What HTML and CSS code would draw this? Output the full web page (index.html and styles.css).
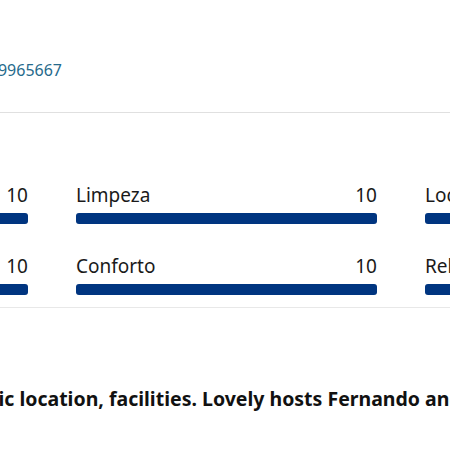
FILE: index.html
```html
<!DOCTYPE html>
<html lang="pt">
<head>
    <meta charset="UTF-8">
    <meta name="viewport" content="width=device-width, initial-scale=1.0">
    <title>Avaliações</title>
    <link rel="stylesheet" href="styles.css">
</head>
<body>
    <div class="page">
        <div class="contact">Telefone: +351 239965667</div>
        <hr class="divider">

        <div class="ratings">
            <div class="rating">
                <div class="rating-head"><span>Funcionários</span><span>10</span></div>
                <div class="bar"><div class="bar-fill" style="width: 100%"></div></div>
            </div>
            <div class="rating">
                <div class="rating-head"><span>Limpeza</span><span>10</span></div>
                <div class="bar"><div class="bar-fill" style="width: 100%"></div></div>
            </div>
            <div class="rating">
                <div class="rating-head"><span>Localização</span><span>10</span></div>
                <div class="bar"><div class="bar-fill" style="width: 100%"></div></div>
            </div>
            <div class="rating">
                <div class="rating-head"><span>Comodidades</span><span>10</span></div>
                <div class="bar"><div class="bar-fill" style="width: 100%"></div></div>
            </div>
            <div class="rating">
                <div class="rating-head"><span>Conforto</span><span>10</span></div>
                <div class="bar"><div class="bar-fill" style="width: 100%"></div></div>
            </div>
            <div class="rating">
                <div class="rating-head"><span>Relação qualidade/preço</span><span>10</span></div>
                <div class="bar"><div class="bar-fill" style="width: 100%"></div></div>
            </div>
        </div>

        <div class="review">
            <p class="review-title">Fantastic location, facilities. Lovely hosts Fernando and Ana made us feel at home.</p>
        </div>
    </div>
</body>
</html>
```

FILE: styles.css
```css
* {
    margin: 0;
    padding: 0;
    box-sizing: border-box;
}

body {
    font-family: "Noto Sans", "Open Sans", sans-serif;
    background: #fff;
    color: #1a1a1a;
    overflow: hidden;
    width: 450px;
    height: 450px;
}

.page {
    width: 999px;
    margin-left: -273px;
}

.contact {
    width: 335px;
    padding-top: 58px;
    text-align: right;
    white-space: nowrap;
    font-size: 16px;
    line-height: 24px;
    color: #266a8c;
}

.divider {
    border: none;
    border-top: 1px solid #e0e0e0;
    margin-top: 30px;
}

.ratings {
    display: grid;
    grid-template-columns: repeat(3, 301px);
    column-gap: 48px;
    row-gap: 30px;
    padding: 70px 0 12px;
    border-bottom: 1px solid #e8e8e8;
}

.rating-head {
    display: flex;
    justify-content: space-between;
    font-size: 19px;
    line-height: 24px;
    white-space: nowrap;
}

.bar {
    margin-top: 6px;
    height: 11px;
    border-radius: 3px;
    background: #ebebeb;
}

.bar-fill {
    height: 100%;
    border-radius: 3px;
    background: #003580;
}

.review {
    padding: 77px 0 0 198px;
}

.review-title {
    font-size: 19.5px;
    font-weight: 700;
    line-height: 28px;
    white-space: nowrap;
    color: #111;
}
```
